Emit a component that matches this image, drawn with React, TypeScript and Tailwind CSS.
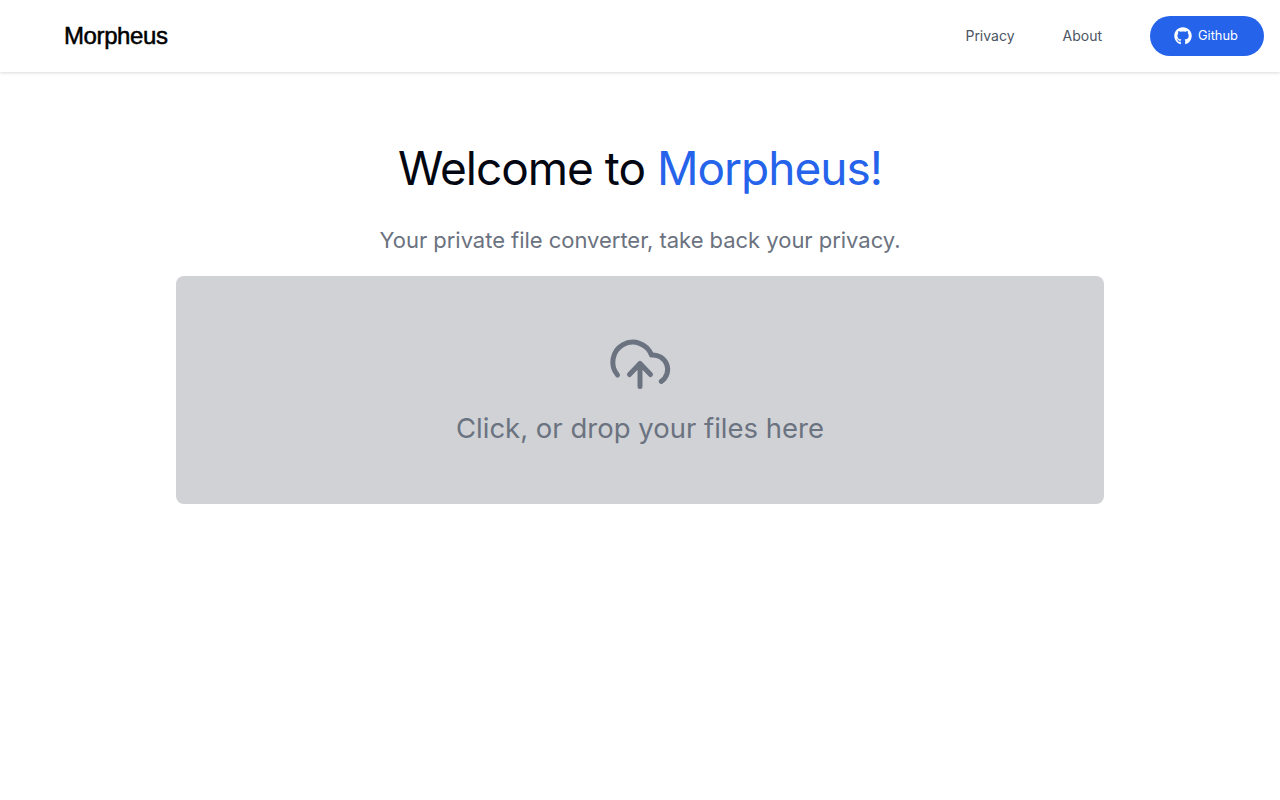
import { FaGithub } from "react-icons/fa";

function CloudIcon() {
  return (
    <svg width="64" height="54" viewBox="608 337 64 54" fill="none" stroke="#6b7280" strokeWidth="5" strokeLinecap="round" strokeLinejoin="round">
      <path d="M617.5 375 A20 20 0 1 1 651.5 355 A14.5 14.5 0 0 1 661.3 381.4" />
      <path d="M629.5 374.5 L640 363.5 L650.5 374.5 M640 363.5 V386.5" />
    </svg>
  );
}

export default function App() {
  return (
    <div className="min-h-screen bg-white font-['Inter',sans-serif]">
      <nav className="h-[72px] flex items-center justify-between pl-16 pr-4 bg-white shadow-[0_1px_3px_rgba(0,0,0,0.15)]">
        <span className="font-['Liberation_Sans',sans-serif] text-2xl text-black tracking-[-0.4px] [-webkit-text-stroke:0.5px_black]">
          Morpheus
        </span>
        <div className="flex items-center">
          <a className="px-3 text-sm text-[#4b5563]">Privacy</a>
          <a className="ml-6 px-3 text-sm text-[#4b5563]">About</a>
          <a className="ml-9 h-10 w-[114px] pl-6 flex items-center gap-1.5 rounded-full bg-[#2563eb] text-[12.8px] text-white">
            <FaGithub className="w-[18px] h-[18px]" />
            Github
          </a>
        </div>
      </nav>
      <main className="w-[928px] mx-auto flex flex-col items-center">
        <h1 className="mt-[66px] text-[46px] leading-[60px] tracking-[-1px] text-[#030712] font-normal">
          Welcome to <span className="text-[#2563eb]">Morpheus!</span>
        </h1>
        <p className="mt-7 mb-[22px] text-[22px] leading-7 tracking-[-0.03px] text-[#6b7280]">
          Your private file converter, take back your privacy.
        </p>
        <div className="w-full h-[228px] rounded-lg bg-[#d1d2d6] flex flex-col items-center pt-[61px]">
          <CloudIcon />
          <p className="mt-[19px] text-[27.5px] leading-9 text-[#6b7280]">Click, or drop your files here</p>
        </div>
      </main>
    </div>
  );
}
